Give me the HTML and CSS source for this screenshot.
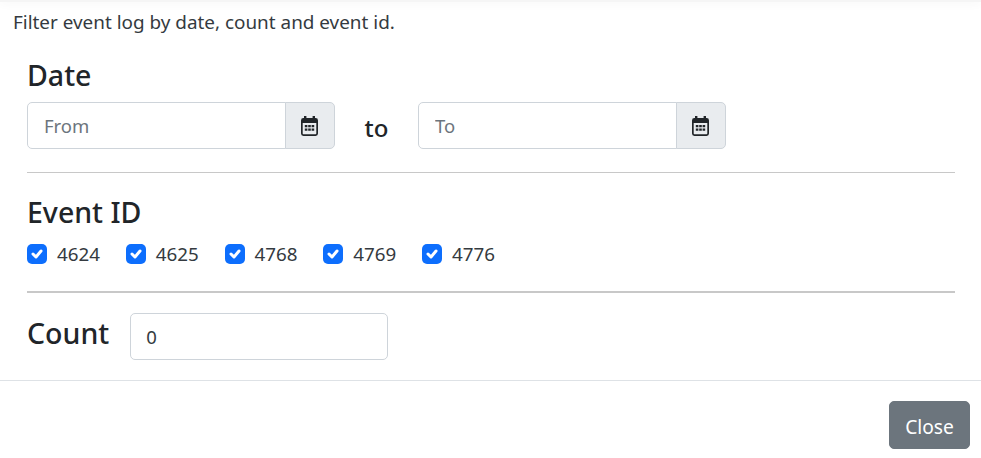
FILE: index.html
```html
<!DOCTYPE html>
<html lang="en">
<head>
    <meta charset="UTF-8">
    <meta name="viewport" content="width=device-width, initial-scale=1.0">
    <title>Filter event log</title>
    <link rel="stylesheet" href="styles.css">
</head>
<body>
    <div class="top-shadow"></div>
    <p class="intro">Filter event log by date, count and event id.</p>
    <main class="filters">
        <h5 class="section-title">Date</h5>
        <div class="date-row">
            <div class="input-group">
                <input class="form-control" type="text" placeholder="From">
                <span class="input-addon">
                    <svg viewBox="0 0 17 20" width="17" height="20" fill="#212529"><path d="M3 0h2.400v3H3zM11.600 0H14v3h-2.400z"/><path fill-rule="evenodd" d="M2.400 2h12.200A2.400 2.400 0 0 1 17 4.400v13.200a2.400 2.400 0 0 1-2.400 2.400H2.400A2.400 2.400 0 0 1 0 17.600V4.400A2.400 2.400 0 0 1 2.400 2zM1.700 7v10.300c0 .6.400 1 1 1h11.600c.6 0 1-.4 1-1V7z"/><path d="M3.800 9h2.600v2.300H3.800zM7.200 9h2.600v2.300H7.200zM10.600 9h2.600v2.300h-2.600zM3.800 12.400h2.600v2.300H3.800zM7.200 12.400h2.600v2.300H7.200zM10.600 12.400h2.600v2.300h-2.600z"/></svg>
                </span>
            </div>
            <span class="to-label">to</span>
            <div class="input-group">
                <input class="form-control" type="text" placeholder="To">
                <span class="input-addon">
                    <svg viewBox="0 0 17 20" width="17" height="20" fill="#212529"><path d="M3 0h2.400v3H3zM11.600 0H14v3h-2.400z"/><path fill-rule="evenodd" d="M2.400 2h12.200A2.400 2.400 0 0 1 17 4.400v13.200a2.400 2.400 0 0 1-2.400 2.400H2.400A2.400 2.400 0 0 1 0 17.600V4.400A2.400 2.400 0 0 1 2.400 2zM1.700 7v10.300c0 .6.400 1 1 1h11.600c.6 0 1-.4 1-1V7z"/><path d="M3.800 9h2.600v2.300H3.800zM7.200 9h2.600v2.300H7.200zM10.600 9h2.600v2.300h-2.600zM3.800 12.400h2.600v2.300H3.800zM7.200 12.400h2.600v2.300H7.200zM10.600 12.400h2.600v2.300h-2.600z"/></svg>
                </span>
            </div>
        </div>
        <hr class="rule">
        <h5 class="section-title event-title">Event ID</h5>
        <div class="check-row">
            <label class="check"><span class="check-box"><svg viewBox="0 0 20 20" width="20" height="20"><path d="M6 10l3 3 5-6" fill="none" stroke="#fff" stroke-width="3" stroke-linecap="round" stroke-linejoin="round"/></svg></span>4624</label>
            <label class="check"><span class="check-box"><svg viewBox="0 0 20 20" width="20" height="20"><path d="M6 10l3 3 5-6" fill="none" stroke="#fff" stroke-width="3" stroke-linecap="round" stroke-linejoin="round"/></svg></span>4625</label>
            <label class="check"><span class="check-box"><svg viewBox="0 0 20 20" width="20" height="20"><path d="M6 10l3 3 5-6" fill="none" stroke="#fff" stroke-width="3" stroke-linecap="round" stroke-linejoin="round"/></svg></span>4768</label>
            <label class="check"><span class="check-box"><svg viewBox="0 0 20 20" width="20" height="20"><path d="M6 10l3 3 5-6" fill="none" stroke="#fff" stroke-width="3" stroke-linecap="round" stroke-linejoin="round"/></svg></span>4769</label>
            <label class="check"><span class="check-box"><svg viewBox="0 0 20 20" width="20" height="20"><path d="M6 10l3 3 5-6" fill="none" stroke="#fff" stroke-width="3" stroke-linecap="round" stroke-linejoin="round"/></svg></span>4776</label>
        </div>
        <hr class="rule rule-thick">
        <div class="count-row">
            <h5 class="section-title count-title">Count</h5>
            <input class="form-control count-input" type="text" value="0">
        </div>
    </main>
    <footer>
        <button class="btn-close-modal" type="button">Close</button>
    </footer>
</body>
</html>
```

FILE: styles.css
```css
/* modal body, scaled up from bootstrap sizes */
html, body {
    height: 100%;
}
body {
    margin: 0;
    width: 981px;
    height: 458px;
    overflow: hidden;
    background: #fff;
    color: #212529;
    font-family: "Noto Sans", "Open Sans", Arial, sans-serif;
    display: flex;
    flex-direction: column;
}
.top-shadow {
    height: 2px;
    margin-bottom: -2px;
    background: #f5f5f5;
    box-shadow: 0 1px 8px rgba(0, 0, 0, 0.09);
}
.intro {
    margin: 0;
    padding: 9px 0 0 13px;
    height: 38px;
    box-sizing: border-box;
    font-size: 18.9px;
    line-height: 26px;
    color: #343a40;
}
.filters {
    flex: 1;
    padding: 0 26px 0 27px;
}
.section-title {
    margin: 0;
    font-size: 28.5px;
    font-weight: 500;
    line-height: 36px;
}
.filters > .section-title:first-child {
    margin-top: 19px;
}
.date-row {
    display: flex;
    align-items: center;
    margin-top: 9px;
}
.input-group {
    display: flex;
    width: 308px;
    height: 47px;
}
.form-control {
    box-sizing: border-box;
    min-width: 0;
    flex: 1;
    height: 47px;
    padding: 0 16px;
    border: 1px solid #ced4da;
    border-radius: 5px 0 0 5px;
    background: #fff;
    color: #343a40;
    font-family: inherit;
    font-size: 18.5px;
}
.form-control::placeholder {
    color: #6c757d;
}
.input-addon {
    box-sizing: border-box;
    width: 50px;
    padding-right: 1px;
    display: flex;
    align-items: center;
    justify-content: center;
    margin-left: -1px;
    border: 1px solid #ced4da;
    border-radius: 0 5px 5px 0;
    background: #e9ecef;
}
.to-label {
    width: 83px;
    text-align: center;
    font-size: 24px;
    font-weight: 500;
    padding-top: 4px;
}
.rule {
    height: 1px;
    margin: 23px 0 0;
    border: 0;
    background: #c8c8c8;
}
.rule-thick {
    height: 2px;
    margin-top: 22px;
}
.event-title {
    margin-top: 21px;
}
.check-row {
    display: flex;
    margin-top: 9px;
}
.check {
    flex: 0 0 98.75px;
    display: flex;
    align-items: center;
    gap: 10px;
    height: 30px;
    font-size: 18.8px;
    color: #343a40;
}
.check-box {
    width: 20px;
    height: 20px;
    border-radius: 5px;
    background: #0d6efd;
    display: block;
}
.check-box svg {
    display: block;
}
.count-row {
    display: flex;
    align-items: flex-start;
    gap: 21px;
    margin-top: 20px;
}
.count-title {
    line-height: 40px;
}
.count-input {
    flex: none;
    width: 258px;
    padding-left: 15px;
    border-radius: 5px;
}
footer {
    height: 78px;
    box-sizing: border-box;
    border-top: 1px solid #dee2e6;
    display: flex;
    justify-content: flex-end;
    align-items: flex-start;
    padding: 20px 11px 0 0;
}
.btn-close-modal {
    width: 81px;
    height: 48px;
    padding: 2px 0 0;
    border: 1px solid #6c757d;
    border-radius: 5px;
    background: #6c757d;
    color: #fff;
    font-family: inherit;
    font-size: 19.2px;
}
```
